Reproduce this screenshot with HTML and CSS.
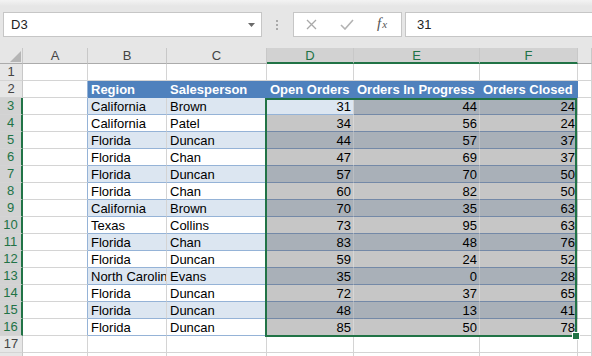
FILE: index.html
```html
<!DOCTYPE html>
<html lang="en">
<head>
    <meta charset="UTF-8">
    <meta name="viewport" content="width=device-width, initial-scale=1.0">
    <title>Orders sheet</title>
    <link rel="stylesheet" href="styles.css">
</head>
<body>
    <div class="formula-bar">
        <div class="name-box">
            <span>D3</span>
            <svg class="drop" width="7" height="4" viewBox="0 0 7 4"><path d="M0 0h7L3.5 4z" fill="#6a6a6a"/></svg>
        </div>
        <div class="grip"><i></i><i></i><i></i></div>
        <div class="fx-buttons">
            <svg class="btn-x" width="11" height="11" viewBox="0 0 11 11"><path d="M1 1l9 9M10 1l-9 9" stroke="#a9a9a9" stroke-width="1.3" fill="none"/></svg>
            <svg class="btn-ok" width="14" height="11" viewBox="0 0 14 11"><path d="M1 6l4 4 8-9" stroke="#b3b3b3" stroke-width="1.6" fill="none"/></svg>
            <span class="fx">f<span>x</span></span>
        </div>
        <div class="formula-input">31</div>
    </div>

    <div class="sheet">
        <!-- column headers -->
        <div class="colh corner"><svg width="11" height="11" viewBox="0 0 11 11"><path d="M11 0v11H0z" fill="#b5b5b5"/></svg></div>
        <div class="colh">A</div>
        <div class="colh">B</div>
        <div class="colh">C</div>
        <div class="colh on">D</div>
        <div class="colh on">E</div>
        <div class="colh on">F</div>
        <div class="colh"></div>

        <!-- row 1 -->
        <div class="rh">1</div>
        <div></div><div></div><div></div><div></div><div></div><div></div><div></div>

        <!-- row 2 -->
        <div class="rh">2</div>
        <div class="tl"></div>
        <div class="th">Region</div>
        <div class="th">Salesperson</div>
        <div class="th">Open Orders</div>
        <div class="th">Orders In Progress</div>
        <div class="th">Orders Closed</div>
        <div></div>

        <div class="rh on">3</div>
        <div class="tl"></div>
        <div class="tb">California</div><div class="tb">Brown</div>
        <div class="tb num">31</div><div class="sb num">44</div><div class="sb num">24</div>
        <div></div>

        <div class="rh on">4</div>
        <div class="tl"></div>
        <div class="tw">California</div><div class="tw">Patel</div>
        <div class="sw num">34</div><div class="sw num">56</div><div class="sw num">24</div>
        <div></div>

        <div class="rh on">5</div>
        <div class="tl"></div>
        <div class="tb">Florida</div><div class="tb">Duncan</div>
        <div class="sb num">44</div><div class="sb num">57</div><div class="sb num">37</div>
        <div></div>

        <div class="rh on">6</div>
        <div class="tl"></div>
        <div class="tw">Florida</div><div class="tw">Chan</div>
        <div class="sw num">47</div><div class="sw num">69</div><div class="sw num">37</div>
        <div></div>

        <div class="rh on">7</div>
        <div class="tl"></div>
        <div class="tb">Florida</div><div class="tb">Duncan</div>
        <div class="sb num">57</div><div class="sb num">70</div><div class="sb num">50</div>
        <div></div>

        <div class="rh on">8</div>
        <div class="tl"></div>
        <div class="tw">Florida</div><div class="tw">Chan</div>
        <div class="sw num">60</div><div class="sw num">82</div><div class="sw num">50</div>
        <div></div>

        <div class="rh on">9</div>
        <div class="tl"></div>
        <div class="tb">California</div><div class="tb">Brown</div>
        <div class="sb num">70</div><div class="sb num">35</div><div class="sb num">63</div>
        <div></div>

        <div class="rh on">10</div>
        <div class="tl"></div>
        <div class="tw">Texas</div><div class="tw">Collins</div>
        <div class="sw num">73</div><div class="sw num">95</div><div class="sw num">63</div>
        <div></div>

        <div class="rh on">11</div>
        <div class="tl"></div>
        <div class="tb">Florida</div><div class="tb">Chan</div>
        <div class="sb num">83</div><div class="sb num">48</div><div class="sb num">76</div>
        <div></div>

        <div class="rh on">12</div>
        <div class="tl"></div>
        <div class="tw">Florida</div><div class="tw">Duncan</div>
        <div class="sw num">59</div><div class="sw num">24</div><div class="sw num">52</div>
        <div></div>

        <div class="rh on">13</div>
        <div class="tl"></div>
        <div class="tb">North Carolina</div><div class="tb">Evans</div>
        <div class="sb num">35</div><div class="sb num">0</div><div class="sb num">28</div>
        <div></div>

        <div class="rh on">14</div>
        <div class="tl"></div>
        <div class="tw">Florida</div><div class="tw">Duncan</div>
        <div class="sw num">72</div><div class="sw num">37</div><div class="sw num">65</div>
        <div></div>

        <div class="rh on">15</div>
        <div class="tl"></div>
        <div class="tb">Florida</div><div class="tb">Duncan</div>
        <div class="sb num">48</div><div class="sb num">13</div><div class="sb num">41</div>
        <div></div>

        <div class="rh on">16</div>
        <div class="tl"></div>
        <div class="tw">Florida</div><div class="tw">Duncan</div>
        <div class="sw num">85</div><div class="sw num">50</div><div class="sw num">78</div>
        <div></div>

        <div class="rh">17</div>
        <div></div><div></div><div></div><div></div><div></div><div></div><div></div>

        <div class="rh"></div>
        <div></div><div></div><div></div><div></div><div></div><div></div><div></div>

        <!-- selection D3:F16 -->
        <div class="selection"><span class="handle"></span></div>
    </div>
</body>
</html>
```

FILE: styles.css
```css
html, body {
    margin: 0;
    padding: 0;
}
body {
    width: 592px;
    height: 356px;
    overflow: hidden;
    background-color: #fff;
    font-family: "Liberation Sans", Arial, sans-serif;
    font-size: 13px;
    color: #000;
}
.formula-bar {
    height: 48px;
    box-sizing: border-box;
    padding: 12px 0 0 3px;
    display: flex;
    align-items: flex-start;
    background: linear-gradient(#f3f3f3, #e6e6e6 6px);
}
.name-box {
    width: 259px;
    height: 25px;
    box-sizing: border-box;
    border: 1px solid #c6c6c6;
    background-color: #fff;
    display: flex;
    align-items: center;
    justify-content: space-between;
    padding: 0 6px 0 7px;
    color: #222;
}
.grip {
    width: 2px;
    margin: 8px 15px 0 14px;
    display: flex;
    flex-direction: column;
    gap: 2px;
}
.grip i {
    width: 2px;
    height: 2px;
    background-color: #a9a9a9;
}
.fx-buttons {
    width: 109px;
    height: 25px;
    box-sizing: border-box;
    border: 1px solid #c6c6c6;
    background-color: #fff;
    display: flex;
    align-items: center;
    padding-left: 12px;
}
.btn-x {
    margin-right: 23px;
}
.btn-ok {
    margin-right: 23px;
}
.fx {
    font-family: "Liberation Serif", "Times New Roman", serif;
    font-style: italic;
    font-size: 15px;
    color: #555;
    margin-top: -2px;
}
.fx span {
    font-size: 11px;
    margin-left: 1px;
}
.formula-input {
    flex: 1;
    height: 25px;
    box-sizing: border-box;
    margin-left: 3px;
    border: 1px solid #c6c6c6;
    border-right: none;
    background-color: #fff;
    padding-left: 11px;
    line-height: 23px;
    color: #222;
}
.sheet {
    position: relative;
    display: grid;
    grid-template-columns: 23px 65px 79px 100px 87px 126px 98px 14px;
    grid-template-rows: 16px;
    grid-auto-rows: 17px;
}
.sheet > div {
    box-sizing: border-box;
    border-right: 1px solid #d4d4d4;
    border-bottom: 1px solid #d4d4d4;
    padding: 2px 2px 0 3px;
    line-height: 14px;
    white-space: nowrap;
    overflow: hidden;
}
.sheet > .colh {
    background-color: #e6e6e6;
    border-right-color: #c8c8c8;
    border-bottom-color: #ababab;
    text-align: center;
    color: #444;
    padding: 0;
    line-height: 15px;
}
.sheet > .colh.on {
    background-color: #d2d2d2;
    color: #217346;
    border-bottom: 2px solid #217346;
}
.sheet > .corner {
    display: flex;
    align-items: flex-end;
    justify-content: flex-end;
    padding: 0 1px 1px 0;
}
.corner svg {
    display: block;
}
.sheet > .rh {
    background-color: #e6e6e6;
    border-right-color: #c8c8c8;
    border-bottom-color: #d4d4d4;
    text-align: center;
    color: #444;
    padding: 0;
    line-height: 16px;
}
.sheet > .rh.on {
    background-color: #d2d2d2;
    color: #217346;
    border-right: 2px solid #217346;
}
.sheet > .tl {
    border-right-color: #95b3d7;
}
.sheet > .th {
    background-color: #4f81bd;
    border-right-color: #4f81bd;
    border-bottom-color: #4f81bd;
    color: #fff;
    font-weight: bold;
}
.sheet > .tw {
    border-bottom-color: #95b3d7;
}
.sheet > .tb {
    background-color: #dce6f1;
    border-bottom-color: #95b3d7;
}
.sheet > .sw {
    background-color: #c6c6c6;
    border-right-color: #d6d6d6;
    border-bottom-color: #7489a7;
}
.sheet > .sb {
    background-color: #a9b0b8;
    border-right-color: #b9bec4;
    border-bottom-color: #7489a7;
}
.sheet > .num {
    text-align: right;
    padding-right: 2px;
}
.sheet > .selection {
    position: absolute;
    left: 265px;
    top: 50px;
    width: 312px;
    height: 239px;
    border: 2px solid #217346;
    padding: 0;
    overflow: visible;
    pointer-events: none;
}
.handle {
    position: absolute;
    right: -5px;
    bottom: -5px;
    width: 6px;
    height: 6px;
    background-color: #217346;
    border: 1px solid #fff;
}
```
